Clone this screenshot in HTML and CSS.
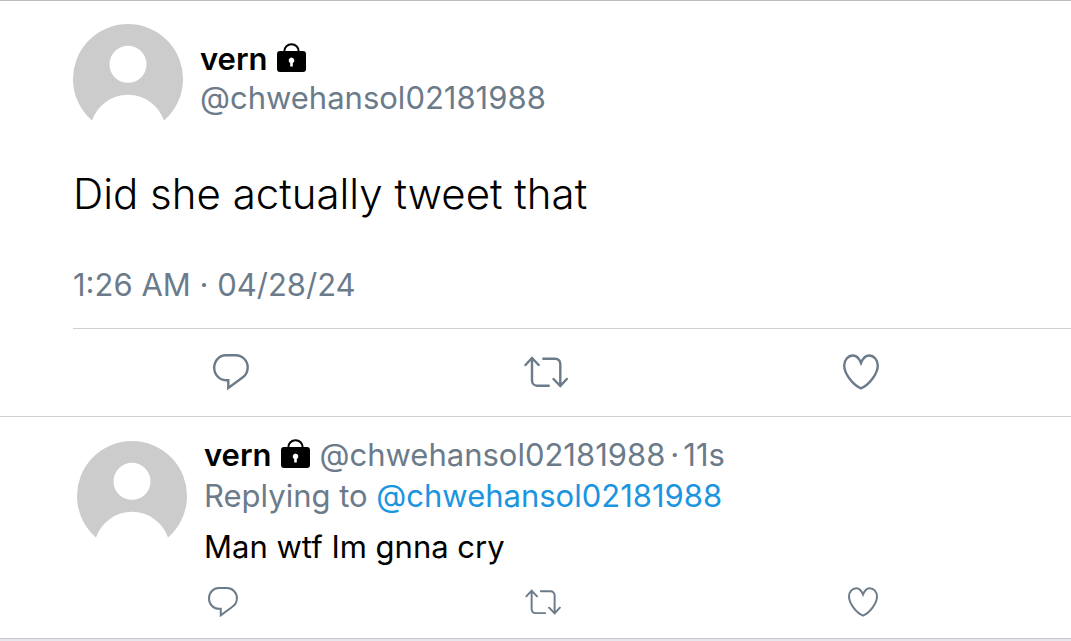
FILE: index.html
```html
<!DOCTYPE html>
<html lang="en">
<head>
<meta charset="utf-8">
<meta name="viewport" content="width=device-width, initial-scale=1">
<title>Tweet</title>
<link rel="stylesheet" href="styles.css">
</head>
<body>
<svg class="sprite" aria-hidden="true">
  <symbol id="avatar" viewBox="0 0 110 97"><path fill="#ccc" fill-rule="evenodd" d="M19 96.6A55 55 0 1 1 91 96.6A38 38 0 0 0 19 96.6zM55 21.8a18.5 18.5 0 1 0 0 37a18.5 18.5 0 1 0 0-37z"/></symbol>
  <symbol id="lock" viewBox="0 0 30 30"><path fill="none" stroke="#000" stroke-width="2" d="M7.3 9.5V8.4a7 7 0 0 1 14.4 0V9.5"/><path fill-rule="evenodd" d="M3 8h23a3 3 0 0 1 3 3v15a3 3 0 0 1-3 3H3a3 3 0 0 1-3-3V11a3 3 0 0 1 3-3zM14.500 14.400a3 3 0 0 0-1.300 5.600v3.600h2.600V20a3 3 0 0 0-1.300-5.600z"/></symbol>
  <symbol id="reply" viewBox="0 0 36 36"><path d="M12.7 1.2h10c6.6 0 12 5.4 12 12.2 0 4.500-2.400 8.500-6.200 10.900L15.300 34v-7.800h-2.600C6.500 26.200 1.200 20.600 1.200 13.700S6.500 1.200 12.700 1.200z"/></symbol>
  <symbol id="retweet" viewBox="0 0 44 32"><path d="M1.500 9L8 2l6.700 7M8 2v22.700a5 5 0 0 0 5 5h11.700M19.300 2.700h12a5 5 0 0 1 5 5V30M29.500 23l6.800 7 6.500-7"/></symbol>
  <symbol id="heart" viewBox="0 0 36 36"><path d="M18 9C16 4 13.500 1.500 10 1.500 5 1.500 1.200 6 1.200 11.500 1.200 20 10.500 31.500 18 34.300 25.500 31.500 34.800 20 34.800 11.500 34.800 6 31 1.500 26 1.500 22.500 1.500 20 4 18 9z"/></symbol>
</svg>
<main class="thread">
  <article class="tweet">
    <header class="author">
      <svg class="avatar" role="img" aria-label="Profile picture"><use href="#avatar"/></svg>
      <div class="identity">
        <div class="line"><strong class="name">vern</strong><svg class="lock" role="img" aria-label="Protected account"><use href="#lock"/></svg></div>
        <div class="handle">@chwehansol02181988</div>
      </div>
    </header>
    <p class="text">Did she actually tweet that</p>
    <time class="time" datetime="2024-04-28T01:26">1:26 AM · 04/28/24</time>
    <div class="actions">
      <button class="action" type="button" aria-label="Reply"><svg class="icon"><use href="#reply"/></svg></button>
      <button class="action" type="button" aria-label="Retweet"><svg class="icon icon-wide"><use href="#retweet"/></svg></button>
      <button class="action" type="button" aria-label="Like"><svg class="icon"><use href="#heart"/></svg></button>
    </div>
  </article>
  <article class="comment">
    <div class="comment-main">
      <svg class="avatar" role="img" aria-label="Profile picture"><use href="#avatar"/></svg>
      <div class="comment-body">
        <div class="line"><strong class="name">vern</strong><svg class="lock" role="img" aria-label="Protected account"><use href="#lock"/></svg><span class="handle">@chwehansol02181988</span><span class="age">·<time>11s</time></span></div>
        <div class="handle">Replying to <a class="mention" href="#">@chwehansol02181988</a></div>
        <p class="comment-text">Man wtf Im gnna cry</p>
      </div>
    </div>
    <div class="actions actions-small">
      <button class="action" type="button" aria-label="Reply"><svg class="icon"><use href="#reply"/></svg></button>
      <button class="action" type="button" aria-label="Retweet"><svg class="icon icon-wide"><use href="#retweet"/></svg></button>
      <button class="action" type="button" aria-label="Like"><svg class="icon"><use href="#heart"/></svg></button>
    </div>
  </article>
</main>
</body>
</html>
```
FILE: styles.css
```css
* {
  box-sizing: border-box;
}

body {
  margin: 0;
  background: #e6e6ec;
  color: #000;
  font: 31px/40px Inter, "Liberation Sans", sans-serif;
}

p {
  margin: 0;
}

.sprite {
  position: absolute;
  width: 0;
  height: 0;
}

.thread {
  background: #fff;
  border-top: 1px solid #bcbcc2;
  border-bottom: 1px solid #c8c8ce;
}

.tweet {
  padding: 23px 0 2px 73px;
  border-bottom: 1px solid #d0d0d3;
}

.author {
  display: flex;
  gap: 17px;
}

.avatar {
  flex: none;
  width: 110px;
  height: 97px;
}

.identity {
  padding-top: 15px;
  line-height: 39px;
}

.line {
  display: flex;
  align-items: center;
}

.name {
  font-weight: 600;
}

.lock {
  flex: none;
  width: 30px;
  height: 30px;
  margin: 0 9px 2px;
}

.handle,
.time,
.age {
  color: #6b7b8a;
}

.text {
  padding-top: 45px;
  font-size: 42px;
  font-weight: 300;
  line-height: 56px;
}

.time {
  display: block;
  padding: 43px 0 23px;
}

.actions {
  display: grid;
  grid-template-columns: repeat(3, 1fr);
  padding-right: 53px;
  border-top: 1px solid #d0d0d3;
}

.action {
  display: flex;
  align-items: center;
  justify-content: center;
  height: 85px;
  padding: 0;
  border: 0;
  background: none;
  cursor: pointer;
}

.icon {
  width: 36px;
  height: 36px;
  fill: none;
  stroke: #6b7b8a;
  stroke-width: 2.4px;
  stroke-linecap: round;
}

.icon-wide {
  width: 44px;
  height: 32px;
}

.comment {
  padding: 24px 0 3px 77px;
}

.comment-main {
  display: flex;
  gap: 17px;
}

.comment-body {
  margin-top: -7px;
  padding-bottom: 2px;
  line-height: 41px;
}

.age {
  display: flex;
  gap: 4px;
  padding-left: 5px;
}

.mention {
  color: #1b95e0;
  text-decoration: none;
}

.comment-text {
  padding-top: 10px;
}

.actions-small {
  margin-left: -14px;
  padding-right: 48px;
  border: 0;
}

.actions-small .action {
  height: 66px;
}

.actions-small .icon {
  width: 30px;
  height: 30px;
}

.actions-small .icon-wide {
  width: 36px;
  height: 26px;
}
```
